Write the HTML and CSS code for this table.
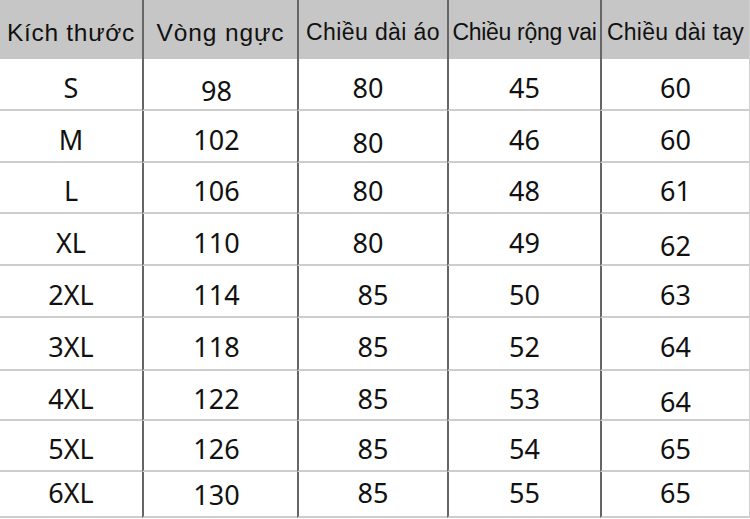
FILE: index.html
```html
<!DOCTYPE html>
<html lang="vi">
<head>
<meta charset="utf-8">
<title>Bảng kích thước</title>
<link rel="stylesheet" href="styles.css">
</head>
<body>
<div class="table">
  <div class="hd c1">Kích thước</div>
  <div class="hd c2">Vòng ngực</div>
  <div class="hd c3">Chiều dài áo</div>
  <div class="hd c4">Chiều rộng vai</div>
  <div class="hd c5">Chiều dài tay</div>

  <div class="td c1">S</div><div class="td c2 lo">98</div><div class="td c3 l">80</div><div class="td c4">45</div><div class="td c5">60</div>
  <div class="td c1">M</div><div class="td c2">102</div><div class="td c3 l lo">80</div><div class="td c4">46</div><div class="td c5">60</div>
  <div class="td c1">L</div><div class="td c2">106</div><div class="td c3 l">80</div><div class="td c4">48</div><div class="td c5">61</div>
  <div class="td c1">XL</div><div class="td c2">110</div><div class="td c3 l">80</div><div class="td c4">49</div><div class="td c5 lo">62</div>
  <div class="td c1">2XL</div><div class="td c2">114</div><div class="td c3">85</div><div class="td c4">50</div><div class="td c5">63</div>
  <div class="td c1">3XL</div><div class="td c2">118</div><div class="td c3">85</div><div class="td c4">52</div><div class="td c5">64</div>
  <div class="td c1">4XL</div><div class="td c2">122</div><div class="td c3">85</div><div class="td c4">53</div><div class="td c5 lo">64</div>
  <div class="td c1">5XL</div><div class="td c2">126</div><div class="td c3">85</div><div class="td c4">54</div><div class="td c5">65</div>
  <div class="td c1 last">6XL</div><div class="td c2 last lo">130</div><div class="td c3 last">85</div><div class="td c4 last">55</div><div class="td c5 last">65</div>
</div>
</body>
</html>
```

FILE: styles.css
```css
html, body {
  margin: 0;
  padding: 0;
  background: #ffffff;
}

.table {
  display: grid;
  grid-template-columns: 142px 155px 150px 153px 149px;
  grid-template-rows: 59px 52px 52px 51px 52px 52px 53px 50px 51px 46px;
  width: 749px;
  border-right: 1px solid #cfcfcf;
  color: #111111;
}

.hd, .td {
  box-sizing: border-box;
  display: flex;
  align-items: center;
  justify-content: center;
  white-space: nowrap;
}

.hd {
  background: #c6c6c6;
  font-family: "Liberation Sans", Arial, sans-serif;
  font-size: 23px;
  padding-top: 6px;
}

.hd.c1 { font-size: 24.5px; letter-spacing: 0.7px; justify-content: flex-start; padding-left: 7px; }
.hd.c2 { font-size: 24.5px; letter-spacing: 0.9px; }
.hd.c3 { letter-spacing: 0.4px; }
.hd.c4 { letter-spacing: -0.3px; }
.hd.c5 { letter-spacing: 0.2px; }

.td {
  font-family: "Noto Sans", "Open Sans", sans-serif;
  font-size: 27px;
  border-bottom: 2px solid #cdcdcd;
  padding-top: 6px;
}

.c2, .c3, .c4, .c5 {
  border-left: 2px solid #666666;
}

.td.c2 { padding-right: 8px; }
.td.l { padding-right: 10px; }

.td.lo { padding-top: 13px; }

.td.last { padding-top: 0; padding-bottom: 4px; }
.td.last.lo { padding-top: 0; padding-bottom: 0; }
```
